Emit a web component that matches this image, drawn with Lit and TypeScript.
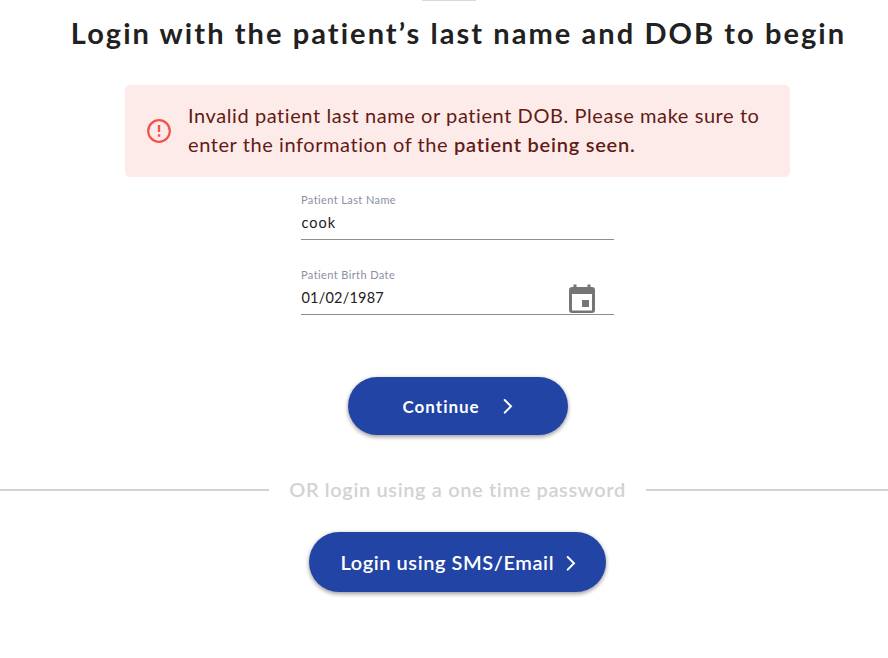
import { LitElement, html, css } from "lit";
import { customElement } from "lit/decorators.js";

const chevron = html`<svg class="chevron" width="10" height="16" viewBox="0 0 10 16">
  <path d="M1.700 2 L8 8.300 L1.700 14.600" fill="none" stroke="#fff" stroke-width="2" stroke-linecap="round"/></svg>`;

@customElement("app-root")
export class AppRoot extends LitElement {
  static styles = css`
    :host { display: block; height: 658px; overflow: hidden; background: #fff;
      font-family: Lato, "Open Sans", sans-serif; font-variant-ligatures: none; color: #212121; }
    * { box-sizing: border-box; }
    .page { width: 915px; display: flex; flex-direction: column; align-items: center; white-space: nowrap; }
    .tab { width: 54px; height: 1px; background: #d9d9d9; margin-right: 17px; }
    h1 { margin: 12px 0 0; padding-left: 2px; height: 40px; line-height: 40px; font-size: 29px; font-weight: 700; letter-spacing: 2.07px; }
    .alert { margin-top: 32px; width: 665px; height: 92px; border-radius: 5px; background: #fdebea;
      color: #621b16; display: flex; align-items: center; padding-left: 22px; gap: 17px; }
    .message { font-size: 20px; line-height: 29px; letter-spacing: .58px; padding-bottom: 2px; }
    .strong { font-family: "Lato Semibold", Lato, sans-serif; font-weight: 600; letter-spacing: .77px; }
    .field { width: 313px; border-bottom: 1px solid #8e8e8e; position: relative; }
    .first { margin-top: 15px; height: 48px; }
    .second { margin-top: 27px; height: 48px; }
    .label { font-size: 11px; line-height: 16px; color: #8a90a0; letter-spacing: .4px; }
    .value { font-size: 14.5px; line-height: 20px; margin-top: 5px; padding-left: .5px; letter-spacing: .2px; }
    .name { letter-spacing: 1px; }
    .calendar { position: absolute; left: 267px; top: 17px; }
    .button { background: #2144a5; color: #fff; border-radius: 30px; display: flex; align-items: center;
      box-shadow: 0 2px 4px rgba(0,0,0,.32), 0 1px 5px rgba(0,0,0,.12); }
    .continue { margin-top: 62px; width: 220px; height: 58px; padding-left: 55px; gap: 23px;
      font-size: 17px; font-weight: 700; letter-spacing: 1px; }
    .divider { margin-top: 40px; width: 915px; height: 30px; display: flex; align-items: center; gap: 20px;
      color: #d2d2d2; font-family: "Lato Semibold", Lato, sans-serif; font-size: 20px; font-weight: 600; letter-spacing: .63px; }
    .divider span { padding-bottom: 2px; }
    .rule { flex: 1; height: 2px; background: #d2d2d2; }
    .sms { margin-top: 27px; width: 297px; height: 60px; padding: 1px 0 0 31.5px; gap: 11.5px;
      font-family: "Lato Semibold", Lato, sans-serif; font-size: 20px; font-weight: 600; letter-spacing: .56px; }
    .sms span { padding-bottom: 2px; }
  `;
  render() {
    return html`<div class="page">
      <div class="tab"></div>
      <h1>Login with the patient’s last name and DOB to begin</h1>
      <div class="alert" role="alert">
        <svg width="24" height="24" viewBox="0 0 24 24"><circle cx="12" cy="12" r="10.8" fill="none" stroke="#f5534a" stroke-width="2.2"/><path d="M12 6v7M12 15.200v2.500" stroke="#f5534a" stroke-width="2.4"/></svg>
        <div class="message">
          <div>Invalid patient last name or patient DOB. Please make sure to</div>
          <div>enter the information of the <span class="strong">patient being seen.</span></div>
        </div>
      </div>
      <div class="field first"><div class="label">Patient Last Name</div><div class="value name">cook</div></div>
      <div class="field second"><div class="label">Patient Birth Date</div><div class="value">01/02/1987</div>
        <svg class="calendar" width="28" height="30" viewBox="0 0 28 30"><path fill="#757575" fill-rule="evenodd" d="M5.500 .5h3v2.500h11V.5h3v2.500h1.500q3 0 3 3v20q0 3-3 3H4q-3 0-3-3V6q0-3 3-3h1.500zM4 10v16.500h20V10zM14 16h7v7h-7z"/></svg>
      </div>
      <div class="button continue"><span>Continue</span>${chevron}</div>
      <div class="divider"><div class="rule"></div><span>OR login using a one time password</span><div class="rule"></div></div>
      <div class="button sms"><span>Login using SMS/Email</span>${chevron}</div>
    </div>`;
  }
}
